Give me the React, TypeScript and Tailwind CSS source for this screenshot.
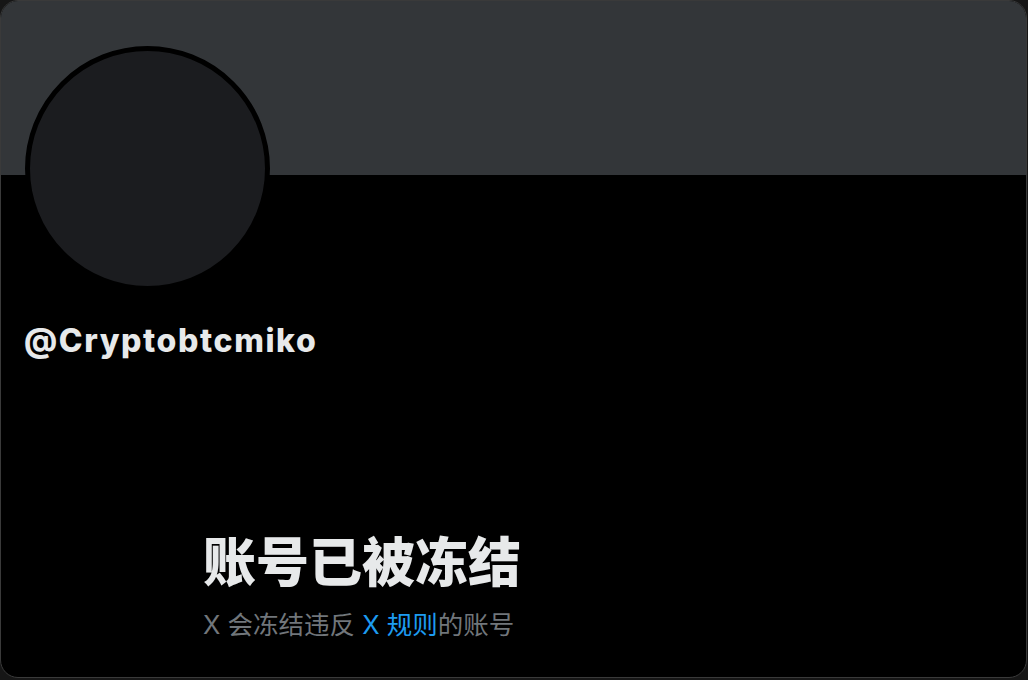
export default function App() {
  return (
    <div className="h-[680px] w-[1028px] overflow-hidden bg-[#161616] font-['Inter','Noto_Sans_CJK_SC',sans-serif]">
      <div className="flex h-[678px] w-[1027px] flex-col overflow-hidden rounded-[18px] border border-[#3a3a3a] bg-black">
        <div className="h-[174px] shrink-0 bg-[#333639]" />
        <div className="-mt-[129px] ml-[24px] h-[245px] w-[245px] rounded-full border-[5px] border-black bg-[#1b1c1f]" />
        <p className="ml-[23px] mt-[30px] text-[32px] font-extrabold leading-[40px] tracking-[1.6px] text-[#e7e9ea]">@Cryptobtcmiko</p>
        <div className="ml-[202px] mt-[170px]">
          <h1 className="text-[53px] font-black leading-[64px] text-[#e7e9ea]">账号已被冻结</h1>
          <p className="mt-[14px] text-[25.5px] leading-[32px] text-[#71767b]">
            X 会冻结违反 <span className="text-[#1d9bf0]">X 规则</span>的账号
          </p>
        </div>
      </div>
    </div>
  );
}
